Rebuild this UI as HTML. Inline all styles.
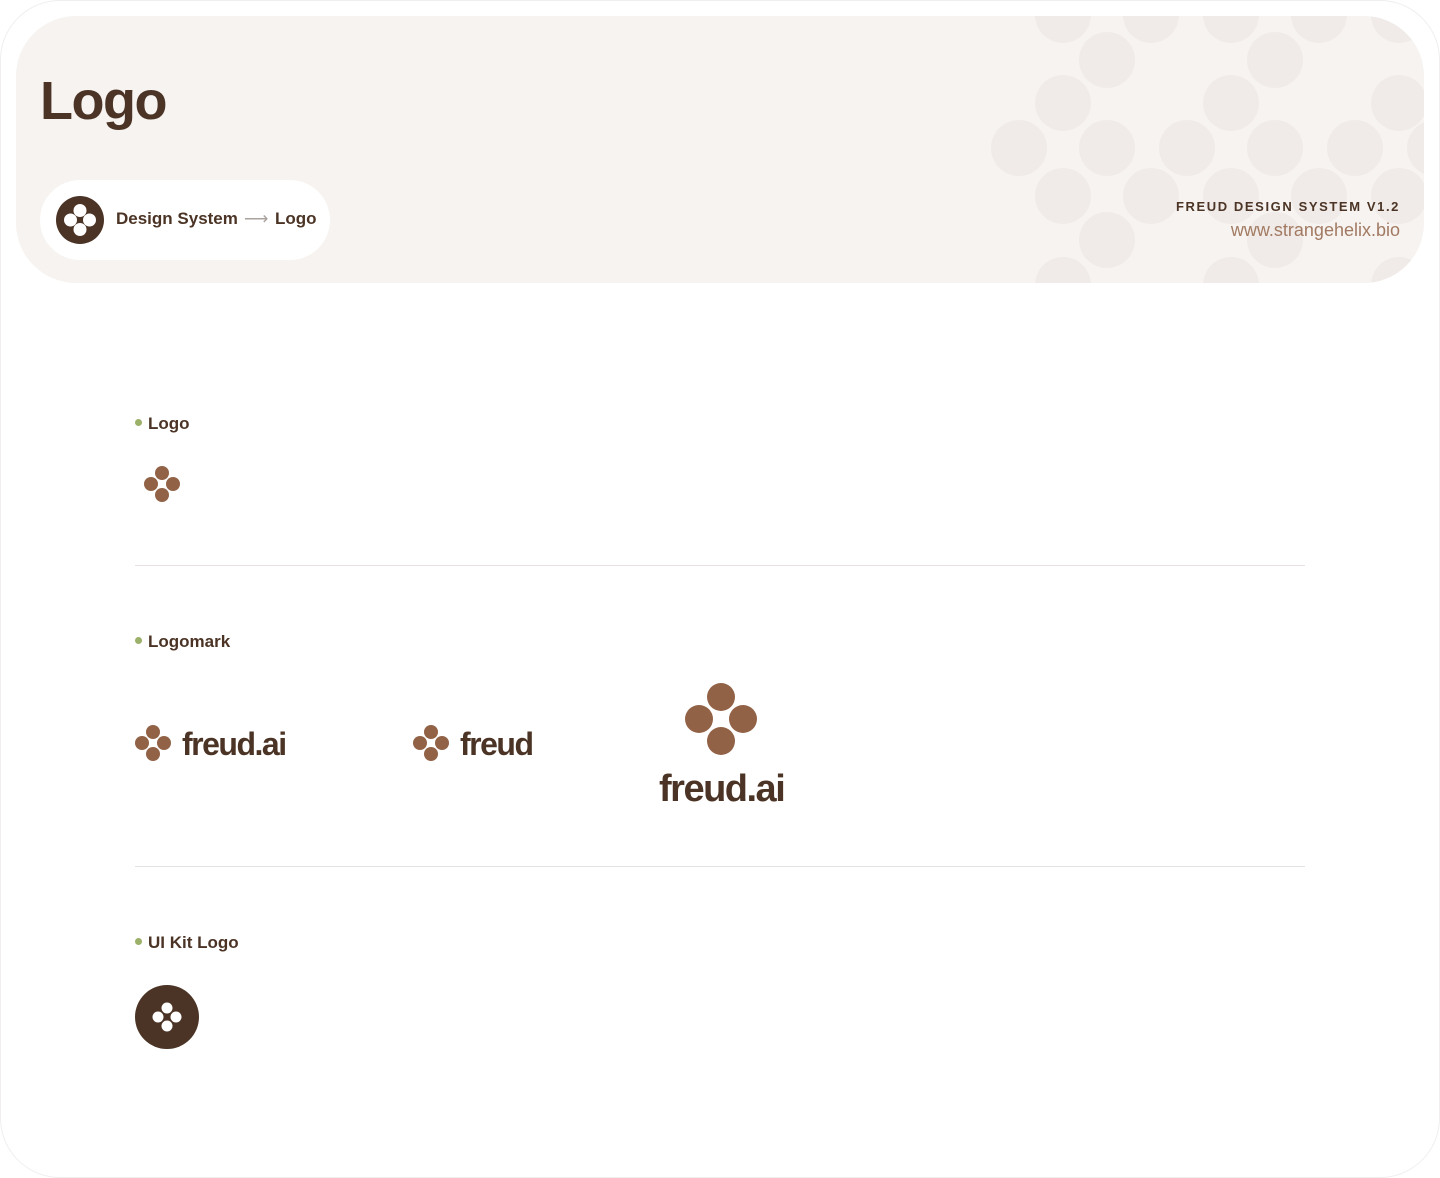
<!DOCTYPE html>
<html><head><meta charset="utf-8"><style>
*{margin:0;padding:0;box-sizing:border-box}
body{width:1440px;height:1178px;background:#fff;font-family:"Liberation Sans",sans-serif;position:relative;overflow:hidden}
.frame{position:absolute;inset:0;border:1px solid #f0eeee;border-radius:60px}
.hdr{position:absolute;left:16px;top:16px;width:1408px;height:267px;background:#f6f3f1;border-radius:60px;overflow:hidden}
h1{position:absolute;left:24px;top:54px;font-size:54px;font-weight:700;color:#4b3425;letter-spacing:-1.5px}
.pill{position:absolute;left:24px;top:164px;width:290px;height:80px;background:#fff;border-radius:40px}
.pill span{position:absolute;top:29px;font-size:17px;font-weight:700;color:#4b3425}
.r1{position:absolute;right:24px;top:183px;font-size:13px;font-weight:700;letter-spacing:1.6px;color:#4b3425}
.r2{position:absolute;right:24px;top:204px;font-size:18px;color:#a27a62}
.lbl{position:absolute;left:135px;font-size:17px;font-weight:700;color:#4b3425}
.lbl:before{content:"";display:inline-block;width:7px;height:7px;border-radius:50%;background:#9bb068;margin-right:6px;vertical-align:3px}
.hr{position:absolute;left:135px;width:1170px;height:1px;background:#e8e0e4}
.wm{position:absolute;font-weight:700;color:#4b3425;letter-spacing:-1.5px}
</style></head><body>
<div class="frame"></div>
<div class="hdr">
<svg width="1408" height="267" style="position:absolute;left:0;top:0" fill="#f0ebe8">
<g transform="translate(-16,-16)">
<circle cx="1063" cy="15" r="28"/><circle cx="1151" cy="15" r="28"/><circle cx="1231" cy="15" r="28"/><circle cx="1319" cy="15" r="28"/><circle cx="1399" cy="15" r="28"/>
<circle cx="1107" cy="60" r="28"/><circle cx="1275" cy="60" r="28"/>
<circle cx="1063" cy="103" r="28"/><circle cx="1231" cy="103" r="28"/><circle cx="1399" cy="103" r="28"/>
<circle cx="1019" cy="148" r="28"/><circle cx="1107" cy="148" r="28"/><circle cx="1187" cy="148" r="28"/><circle cx="1275" cy="148" r="28"/><circle cx="1355" cy="148" r="28"/><circle cx="1435" cy="148" r="28"/>
<circle cx="1063" cy="196" r="28"/><circle cx="1151" cy="196" r="28"/><circle cx="1231" cy="196" r="28"/><circle cx="1319" cy="196" r="28"/><circle cx="1399" cy="196" r="28"/>
<circle cx="1107" cy="240" r="28"/><circle cx="1275" cy="240" r="28"/>
<circle cx="1063" cy="285" r="28"/><circle cx="1231" cy="285" r="28"/><circle cx="1399" cy="285" r="28"/>
</g></svg>
<h1>Logo</h1>
<div class="pill">
<svg width="50" height="50" style="position:absolute;left:15px;top:15px"><circle cx="25" cy="25" r="24" fill="#4b3425"/><g fill="#fff"><circle cx="25" cy="15.5" r="6.5"/><circle cx="25" cy="34.5" r="6.5"/><circle cx="15.5" cy="25" r="6.5"/><circle cx="34.5" cy="25" r="6.5"/></g></svg>
<span style="left:76px">Design System</span>
<span style="left:204px;color:#a9a29d;font-weight:400">⟶</span>
<span style="left:235px">Logo</span>
</div>
<div class="r1">FREUD DESIGN SYSTEM V1.2</div>
<div class="r2">www.strangehelix.bio</div>
</div>

<div class="lbl" style="top:414px">Logo</div>
<svg width="40" height="40" style="position:absolute;left:142px;top:464px" fill="#926247"><circle cx="20" cy="9" r="7"/><circle cx="20" cy="31" r="7"/><circle cx="9" cy="20" r="7"/><circle cx="31" cy="20" r="7"/></svg>
<div class="hr" style="top:565px"></div>

<div class="lbl" style="top:632px">Logomark</div>
<svg width="40" height="40" style="position:absolute;left:133px;top:723px" fill="#926247"><circle cx="20" cy="9" r="7"/><circle cx="20" cy="31" r="7"/><circle cx="9" cy="20" r="7"/><circle cx="31" cy="20" r="7"/></svg>
<div class="wm" style="left:182px;top:726px;font-size:32px">freud.ai</div>
<svg width="40" height="40" style="position:absolute;left:411px;top:723px" fill="#926247"><circle cx="20" cy="9" r="7"/><circle cx="20" cy="31" r="7"/><circle cx="9" cy="20" r="7"/><circle cx="31" cy="20" r="7"/></svg>
<div class="wm" style="left:460px;top:726px;font-size:32px">freud</div>
<svg width="80" height="80" style="position:absolute;left:681px;top:679px" fill="#926247"><circle cx="40" cy="18" r="14"/><circle cx="40" cy="62" r="14"/><circle cx="18" cy="40" r="14"/><circle cx="62" cy="40" r="14"/></svg>
<div class="wm" style="left:659px;top:768px;font-size:38px">freud.ai</div>
<div class="hr" style="top:866px;background:#e2e2e2"></div>

<div class="lbl" style="top:933px">UI Kit Logo</div>
<svg width="66" height="66" style="position:absolute;left:134px;top:984px"><circle cx="33" cy="33" r="32" fill="#4b3425"/><g fill="#fff"><circle cx="33" cy="24" r="5.5"/><circle cx="33" cy="42" r="5.5"/><circle cx="24" cy="33" r="5.5"/><circle cx="42" cy="33" r="5.5"/></g></svg>
</body></html>
